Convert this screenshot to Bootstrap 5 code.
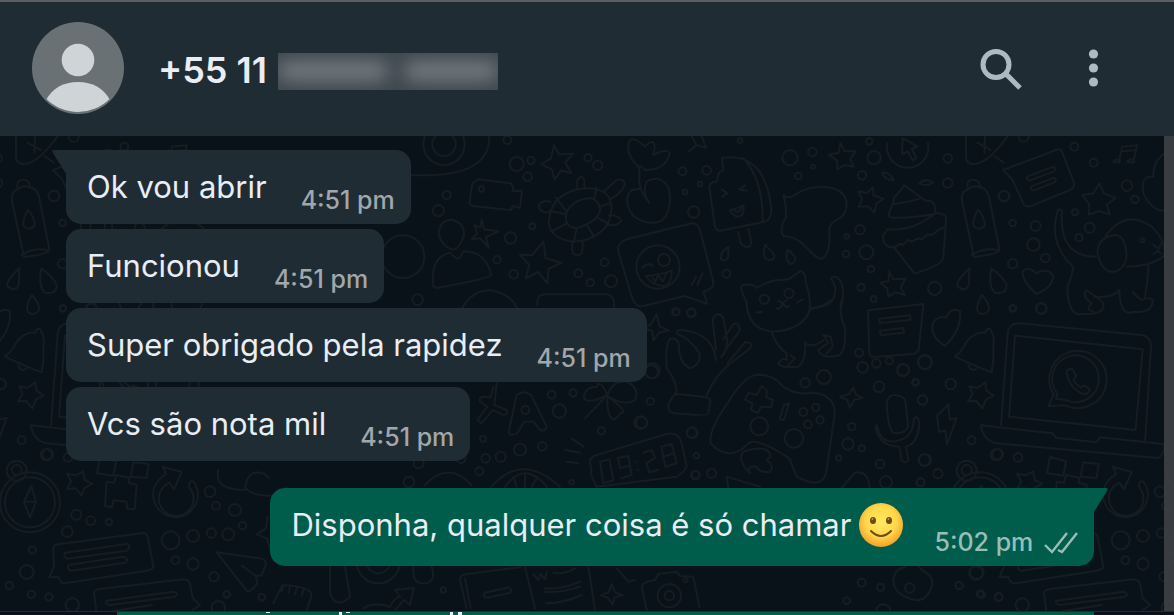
<!DOCTYPE html>
<html lang="pt-BR" data-bs-theme="dark">
<head>
<meta charset="utf-8">
<meta name="viewport" content="width=device-width, initial-scale=1">
<title>Conversa</title>
<link href="https://cdn.jsdelivr.net/npm/bootstrap@5.3.0/dist/css/bootstrap.min.css" rel="stylesheet">
<style>
  body { font-family: Inter, "Liberation Sans", sans-serif; background: #0a1219; color: #e9edef; }
  .chat-header { background: #202c33; border-top: 2px solid #5c5e62; padding: 20px 32px 22px; }
  .avatar { width: 92px; height: 92px; }
  .contact { font-size: 36px; line-height: 44px; font-weight: 600; margin-left: 34px; padding-top: 4px; color: #e9edf5; }
  .redacted { width: 220px; height: 37px; margin: 6px 0 0 11px; background: #3e474e; overflow: hidden; }
  .redacted span { height: 20px; background: #757b81; filter: blur(9px); border-radius: 8px; }
  .header-tools { margin-right: 22px; gap: 54px; }
  .icon-btn { width: 44px; height: 48px; color: #aebac1; line-height: 0; }
  .doodle-layer { z-index: 0; }
  .doodle-layer g { fill: none; stroke: #151d23; stroke-width: 6; stroke-linecap: round; stroke-linejoin: round; }
  .thread { z-index: 1; padding: 14px 80px 44px 66px; }
  .stack { gap: 5px; margin-bottom: 27px; }
  .bubble { border-radius: 15px; background: #202c33; padding: 15px 16px 9px 21px; color: #e9edf5; }
  .bubble p { font-size: 31px; line-height: 44px; padding-bottom: 6px; }
  .bubble time { font-size: 25px; line-height: 30px; font-weight: 500; margin-left: 34px; color: #a2a7ac; white-space: nowrap; }
  .bubble.first { border-top-left-radius: 0; }
  .bubble.sent { background: #005c4b; border-top-right-radius: 0; }
  .bubble.sent p { padding-bottom: 10px; }
  .bubble.sent time { margin-left: 31px; color: #99beb7; }
  .tail { top: 0; width: 14px; height: 24px; }
  .first .tail { right: 100%; }
  .sent .tail { left: 100%; }
  .emoji { width: 44px; height: 44px; margin-left: 8px; }
  .scroll-thumb { z-index: 2; width: 10px; background: rgba(66, 68, 72, .85); }
  .next-row { height: 4px; background: #0a0f19; border-top: 1px solid #252c31; padding: 0 80px 0 117px; z-index: 2; }
  .next-row svg { background: #005c4b; }
</style>
</head>
<body class="min-vh-100 d-flex flex-column">

<header class="chat-header d-flex align-items-center">
  <svg class="avatar flex-shrink-0" viewBox="0 0 92 92" role="img" aria-label="Foto do contato">
    <defs><clipPath id="face"><circle cx="46" cy="45" r="45"/></clipPath></defs>
    <circle cx="46" cy="46" r="46" fill="#6a7175"/>
    <g fill="#cfd4d7" clip-path="url(#face)">
      <circle cx="46" cy="38" r="16.300"/>
      <path d="M14 78Q24 60 46 60T78 78V92H14Z"/>
    </g>
  </svg>
  <h1 class="contact mb-0 text-nowrap">+55 11</h1>
  <div class="redacted d-flex align-items-center gap-3" aria-hidden="true"><span class="w-50"></span><span class="flex-grow-1"></span></div>
  <div class="header-tools ms-auto d-flex align-items-center">
    <button type="button" class="icon-btn btn border-0 p-0" aria-label="Pesquisar">
      <svg width="44" height="48" viewBox="0 0 44 48" fill="none" stroke="currentColor"><circle cx="18" cy="20.500" r="13" stroke-width="5"/><path d="M26 29L30 32L42 44" stroke-width="5"/></svg>
    </button>
    <button type="button" class="icon-btn btn border-0 p-0" aria-label="Menu">
      <svg width="44" height="48" viewBox="0 0 44 48" fill="currentColor"><circle cx="17.500" cy="10" r="4.600"/><circle cx="17.500" cy="24" r="4.600"/><circle cx="17.500" cy="38" r="4.600"/></svg>
    </button>
  </div>
</header>

<main class="position-relative flex-grow-1 d-flex flex-column overflow-hidden">
  <svg class="doodle-layer position-absolute top-0 start-0 w-100 h-100" aria-hidden="true">
    <defs>
    <g id="east">
      <g transform="translate(780,-6) scale(.33333)" data-dots="30 83 23,97 66 13,99 110 6,55 138 10,268 34 10,282 83 20,246 136 13,503 85 13,503 159 14,731 20 15,883 50 12,941 98 12,672 198 16,1041 167 16,1065 208 11,885 247 9,929 293 15,897 323 11,698 279 10,767 288 15,760 344 19,796 384 13,698 401 14,240 299 14,200 319 7,198 372 10,259 367 21,273 417 10,243 472 11,281 507 9,464 475 20,698 535 10,784 536 15,1087 331 6,27 490 14">
        <path d="M181 38l13 26 33-1-16 25 10 22-28-5-20 13-2-26-25-18 30-6zM278 172l3 23 29 12-21 14-6 27-19-19-28 1 10-22-10-24 25 5zM328 424l12 24 36-2-14 27 12 22-29-8-20 12-4-24-20-17 24-5zM958 160l14 31 35 12-26 21 8 29-32-10-30 11 1-31-21-29 32-3z"/>
        <path d="M368 24l44 26-17 6 14 28-11 7-15-27-17 9zM322 40A62 62 0 1 0 444 40M558 20V85Q566 111 600 98T682 20M592 38l40 22M615 20l-2 48M643 78l28 20"/>
        <path d="M10 195Q20 206 39 199Q80 165 140 172Q198 178 200 225C196 280 150 260 148 300Q152 376 125 386C90 384 75 320 12 319Q-5 300 18 260Q20 230 10 195Z"/>
        <path d="M372 165Q365 180 342 203Q340 222 330 242Q320 262 338 263Q390 265 465 252Q470 208 438 213Q405 190 372 165ZM342 222Q390 216 420 205M322 298Q400 305 465 250Q500 248 498 270L490 382Q490 405 404 431L342 352Q308 354 309 317L322 298M342 352L360 342 368 345 385 330 395 335 415 325 425 328 445 312 455 316 475 300 492 292"/>
        <path d="M418 160Q438 142 459 158Q438 171 418 160ZM306 128Q330 125 341 151Q315 151 306 128ZM22 360Q15 390 30 402Q48 400 45 382Q38 368 22 360Z"/>
        <path d="M564 178Q556 148 580 149Q600 150 600 172Q625 176 630 215L658 357Q660 373 582 381L546 214Q542 183 564 178M564 178Q580 164 600 172M575 374Q620 350 656 362M594 239Q574 275 582 289Q597 304 613 288Q618 270 594 239Z"/>
        <path d="M669 120L828 60Q843 54 848 70L882 158Q885 172 870 180L750 229Q736 232 729 218L696 147ZM742 140L820 110Q830 116 822 124L748 152Q738 148 742 140ZM752 170L822 143Q832 149 824 157L760 182Q750 178 752 170Z"/>
        <path d="M1018 92L1026 50 1071 46 1061 92M1028 64L1068 60M1000 95Q1010 83 1018 92T1000 95M1042 95Q1052 82 1061 92T1042 95"/>
        <path d="M846 242Q835 232 831 250Q805 340 880 412Q875 440 862 474Q865 560 905 552Q980 555 969 518Q950 500 918 480Q905 500 935 520Q915 540 940 544M941 500Q1000 505 1018 480Q1020 560 1058 546Q1120 550 1118 510Q1105 500 1084 510Q1070 500 1058 486M846 242Q835 380 948 380M976 318Q1040 235 1115 290Q1165 340 1150 380Q1110 410 1040 410M1105 405Q1105 440 1095 500M1008 314Q955 320 952 365Q965 435 1010 424Q1055 400 1032 336Q1025 320 1008 314ZM1120 344l16 12 8-16M1120 372l14-10 8 10"/>
        <path d="M568 415Q525 455 533 470Q560 490 567 460ZM634 415Q624 470 645 488Q680 495 680 465Q670 440 634 415ZM606 495Q582 535 597 549Q615 558 627 540Q629 520 606 495ZM768 492Q725 450 728 425Q745 405 768 430Q805 410 820 440Q815 475 768 492Z"/>
        <path d="M264 541L430 522 416 660 405 671 283 681Q268 681 268 665ZM298 566L390 556 392 570 300 579ZM300 602L370 594 372 608 302 616ZM495 648Q450 620 458 580Q475 555 500 563Q510 530 540 543Q545 600 495 648Z"/>
        <path d="M-10 450Q10 452 30 445L60 424Q75 420 78 460Q95 510 88 540Q84 560 70 572M90 535Q150 530 160 505Q175 470 152 445Q170 430 185 460Q195 500 182 530M-5 512L8 520 20 510M8 520Q0 540-10 535M8 520Q20 538 28 528M52 518L68 508"/>
        <path d="M1152 72Q1120 90 1120 140Q1080 135 1090 190Q1120 250 1160 240"/>
      </g>
      <g transform="translate(900,164) scale(.33333)" data-dots="339 25 9,424 25 16,75 187 20,10 210 17,47 247 9,152 252 16,68 300 14,215 421 12,73 480 17,114 521 14,62 547 12,289 464 17,354 472 13">
        <path d="M303 375L323 100Q328 68 360 70L725 105Q755 112 753 140L735 425M345 107L728 148 707 390 327 350ZM243 376L458 400 468 413 590 427 600 412 790 432Q800 455 775 474L290 430Q248 420 243 376Z"/>
        <path d="M461 284A86 86 0 1 1 497 316L445 318ZM472 280A70 70 0 1 1 500 301L468 296ZM500 214Q505 204 518 208L528 228Q526 238 520 241Q528 255 543 262L552 256 570 268Q566 284 548 282Q505 262 500 214Z"/>
        <path d="M256 98Q265 75 275 95T280 140Q282 180 275 217Q240 205 165 170Q185 155 200 125Q225 95 256 98ZM205 195Q212 218 230 205M256 247l3 25 22 15-23 11-11 27-18-22-25 1 14-22-10-23 24 5zM145 313L111 348 117 395 136 392 141 433 170 354 149 359Z"/>
      </g>
    </g>
    <g id="west">
      <g transform="translate(0,314) scale(.33333)" data-dots="50 62 30,50 60 15,90 157 90,90 157 75,229 194 15,272 212 13,327 216 9,202 245 16,97 300 11,80 366 21,28 407 11,94 433 11,147 441 11,217 465 20,630 125 16,648 168 12,705 180 18,728 227 11,685 253 18,634 249 14,579 258 18,512 271 27,526 331 12,579 342 17,642 380 14,680 433 10,785 441 10,655 473 20,143 13 16">
        <path d="M94 107L108 155 90 203 72 155ZM72 155H108M250 64l4 26 23 11-24 13-8 22-18-21-25 2 11-23-12-23 26 5zM300 20L348 34 340 77 291 70ZM400 37L446 42 440 84 392 80ZM348 75L342 98 320 95 315 168 336 172 340 150 380 155 382 176 404 178 410 105 386 98 388 83Z"/>
        <path d="M498 72L488 50 545 66 522 118 508 98A52 52 0 1 0 568 112Q565 95 575 94T592 120A67 67 0 1 1 480 86Z"/>
        <path d="M655 60Q640 120 735 120Q740 55 790 70L808 84M735 110Q750 140 830 137M650 307L785 326Q803 332 796 348L785 375 768 380 772 400Q750 430 740 422ZM725 347L768 378M803 200L798 235 770 253 800 265 812 300"/>
        <path d="M160 295Q162 285 175 283L430 249Q442 250 444 265L460 350Q458 358 440 362L195 400Q180 400 175 380L148 382 162 350ZM195 308L380 282Q396 288 380 302L200 326Q188 318 195 308ZM205 345L370 320Q390 325 375 338L215 362Q200 360 205 345Z"/>
        <path d="M290 490L282 430Q282 420 300 417L550 388Q568 388 571 405L578 445 600 465 578 480M320 452L520 425Q540 430 525 440L330 465Q312 462 320 452M340 483L455 465"/>
      </g>
    </g>
    </defs>
    <use href="#east"/><use href="#east" x="-950"/>
    <use href="#west"/><use href="#west" x="950"/>
    <g>
      <g transform="translate(400,-6) scale(.33333)" data-dots="350 102 21,393 91 11,383 140 13,564 83 11,593 106 14,140 195 12,115 242 17,332 324 17,397 289 9,291 389 11,341 433 13,535 430 12,571 458 11,614 397 12,633 454 18,847 124 12,920 121 13,900 162 7,855 186 7,881 246 17,979 431 12,829 546 10,874 548 12,53 509 16,322 30 12,132 43 62,132 43 35,244 177 8,1020 32 7,774 411 65,792 390 18,9 380 64,1093 508 14">
        <path d="M20 134Q270 150 268 20M462 45l15 28 42-2-23 27 18 32-31-9-19 28-9-31-32-16 30-17zM235 148L332 160Q342 168 338 184L366 182 360 234 338 228 333 240 218 228Q205 224 209 210L217 160ZM245 268l7 30 43 6-37 17 8 32-25-28-27 3 18-18-9-25 18 7zM430 334l7 50 47 15-38 17-4 44-28-34-37 20 11-41-29-31 38 1z"/>
        <path d="M116 312Q118 270 155 269Q198 280 191 320Q175 360 158 359Q125 350 116 312ZM100 470Q90 380 150 368Q172 392 180 383L190 364Q260 365 273 435Q270 445 110 474ZM187 533Q220 480 270 481Q330 490 350 533M412 525Q410 490 440 493H620Q645 495 642 530"/>
        <path d="M525 180Q590 165 622 195Q645 230 625 280Q590 330 525 335Q455 330 446 280Q450 200 525 180ZM500 245Q520 208 570 204Q600 210 600 245Q585 280 530 294Q490 295 500 245ZM590 172L583 205M628 220L600 230M620 278L594 264M580 316L562 288M522 333L530 295M460 302L500 280M448 242L494 252M468 202L496 240M532 178V150Q543 130 553 150V174M614 182L650 150Q675 145 674 165Q660 195 630 207M452 215Q420 208 416 230Q420 248 450 248M627 256Q655 255 665 272Q650 290 624 285M516 336L518 370Q530 380 546 370L549 332"/>
        <path d="M716 112Q670 65 690 30Q705 20 735 50Q765 20 764 55L760 75Q795 55 809 68Q800 120 736 120L722 108M718 108V160Q725 195 748 218Q725 185 740 155Q780 130 806 175Q820 240 785 272Q745 290 700 258Q665 210 695 180L722 176"/>
        <path d="M966 84Q1090 65 1112 220Q1120 265 1095 275L960 302Q948 304 944 285L928 170Q930 155 950 155L956 130 970 120ZM1030 84Q1090 150 1088 275M1014 306L1022 340Q1050 365 1054 335L1045 296M965 178L982 190 966 200M1036 166L1018 178 1040 182M990 240Q1015 235 1030 225Q1035 260 1012 260Q995 255 990 240M1002 239Q1015 255 1025 232"/>
        <path d="M655 350Q660 335 680 328L875 280Q895 280 900 300L940 455Q945 475 910 485L922 522 855 498 720 530Q705 525 695 500L655 365ZM728 412Q745 395 758 408M738 438Q780 435 815 422Q815 465 790 468Q755 465 738 438M755 438L765 455 775 436 788 455 800 430M888 440L875 465M908 430L892 465"/>
        <path d="M986 350Q955 370 965 390Q990 395 984 365ZM1095 344Q1085 385 1105 390Q1130 390 1120 370ZM1040 515Q1015 470 1028 465Q1060 460 1070 474Q1100 455 1130 450M1040 515Q1040 545 1050 560M1070 548L1085 545M865 65L890 45 875 20M890 45L918 54 905 20"/>
      </g>
      <g transform="translate(640,164) scale(.33333)" data-dots="107 36 11,154 38 13,37 212 22,5 368 17,155 398 15,169 467 8,167 524 11,215 520 14,495 248 14,552 231 21,657 158 12,668 202 16,709 190 13,748 182 11,789 210 18,855 186 21,826 247 10,717 260 16,848 300 14,635 380 11,624 432 17,666 445 9,596 474 8,720 492 13,855 480 18,841 547 12,738 547 18,358 379 27,462 415 28,490 336 12,527 322 11,540 360 11,504 373 12">
        <path d="M50 42l8 37 28 12-29 7-17 23-3-28-34-12 28-6zM110 285Q110 240 80 205Q75 130 90 118Q105 110 116 128Q115 190 152 205Q185 190 178 160Q150 115 112 102Q105 85 140 92Q220 105 228 180M200 285Q225 230 265 195L330 145Q340 125 315 127L262 190M250 160L300 90Q295 65 280 72L250 118M228 150L218 60Q230 30 250 52L262 125Q260 155 243 172M105 281L195 291Q215 292 210 310L205 340Q203 350 100 339Q80 335 86 310Z"/>
        <path d="M265 306C320 215 355 210 410 240Q450 290 520 278Q590 285 583 350L558 520Q545 570 470 530L448 475Q350 410 325 430Q270 490 212 430Q205 390 265 306ZM365 258l16 14-2 20 20 8-6 22-30-2-10 19-20-10 4-18-22-12 10-20 25 5zM432 315L447 310 432 360 419 357ZM330 520Q290 480 310 455Q385 430 392 470L380 480Q405 500 390 515Q360 520 350 500Q320 495 330 520"/>
        <path d="M320 10Q325 90 400 95Q490 90 512 26Q555 20 572 0M605 0Q595 45 615 80Q620 140 600 165Q545 180 535 150L565 128 550 105 572 110 578 140 560 160M495 130Q520 145 550 120M495 125Q500 180 475 200Q420 205 415 190Q430 170 440 180V160Q410 140 395 98M450 165L465 175 445 195"/>
        <path d="M640 262l8 22 20 10-26 6-12 24-8-24-22-10 27-8zM740 310Q745 280 770 286Q800 290 798 320L804 380Q790 405 760 398Q745 390 740 310ZM710 375Q725 440 780 420Q820 410 822 355Q835 345 838 370Q835 430 797 440L806 480Q795 495 785 480L778 440Q720 440 707 385ZM605 564L645 518Q685 510 689 564M265 564L260 530 360 560"/>
      </g>
      <g transform="translate(400,234) scale(.33333)" data-dots="455 74 12,519 69 11,478 123 20,249 206 9,360 239 18,427 229 13,302 260 15,257 265 13,238 304 12,604 183 11,722 158 19,751 94 11,877 188 16,27 336 16,515 337 7,886 315 13,754 5 20,376 120 12,56 280 15,183 265 14">
        <path d="M290 40L283 105 320 120Q328 135 310 135L278 120 245 160 232 150 262 110 240 95Q238 80 250 80L272 82 280 50M350 75Q370 58 393 75L440 170Q438 185 420 180L400 155H372L352 190Q325 200 326 185Z"/>
        <path d="M622 75Q550 110 552 75Q560 50 590 50Q600 25 622 75Q640 30 680 35Q720 55 705 90Q675 110 625 80Q690 130 660 130Q645 160 630 140Q620 115 622 75L555 145M515 205L550 230M495 240L540 248M500 275L535 280"/>
        <path d="M570 270Q572 262 590 255L800 192Q835 185 845 220L860 290Q850 310 830 320L590 350 575 320ZM600 275L628 268 640 330 610 340ZM660 293L654 263 685 258 695 315 662 325M660 293L690 288M710 275V276M714 300V301M730 248L755 240 765 262 740 280 748 307 775 300M784 230L815 222 830 280 796 290ZM788 260L822 250M275 350Q365 245 480 350M315 350Q375 270 440 350M340 320L350 350M375 310V350M410 325L395 350M75 345Q145 270 215 345"/>
      </g>
      <g transform="translate(230,424) scale(.33333)" data-dots="445 5 65,445 5 35,96 112 10,640 90 8,1318 107 35,1318 107 14,1366 60 6">
        <path d="M130 130L155 80Q165 68 230 88Q250 95 242 115L230 150M160 75L155 95M180 80L176 98M200 85L195 103M220 90L215 108M300 20V100Q320 150 360 110L345 20M550 20Q545 70 580 70Q620 70 605 20M400 145Q430 125 480 140Q495 110 510 110L495 90 552 84 540 135 522 120 495 150M710 145L690 60Q690 45 710 42L870 22M722 145L705 55M885 20L915 145M910 42L925 60 932 42 945 58 950 36M970 38Q1000 45 1035 25M945 85Q990 90 1050 65M945 95Q990 100 1050 80M948 130Q1000 130 1055 105M1075 20L1095 150M765 98L835 82Q850 90 840 98L770 113Q755 108 765 98M1145 72l10 25 24 8-25 7-6 22-13-20-22-8 23-10zM1250 150L1235 80Q1240 65 1275 60L1285 42 1340 35 1350 48 1390 50 1408 140M1160 25L1195 65 1215 60"/>
      </g>
      <g transform="translate(840,344) scale(.33333)" data-dots="65 308 12,122 322 11,357 316 11,420 342 10,475 351 12,408 279 20,209 324 14,20 362 10,130 395 22"><path d="M160 300Q165 265 195 262Q215 230 245 270Q285 290 275 320Q260 365 225 360Q160 345 160 300"/></g>
    </g>
  </svg>

  <section class="thread position-relative flex-grow-1 d-flex flex-column align-items-start" aria-label="Mensagens">
    <div class="stack d-flex flex-column align-items-start">
      <article class="bubble first position-relative d-flex align-items-end">
        <svg class="tail position-absolute" viewBox="0 0 14 24" aria-hidden="true"><path d="M14 0H2Q-1 0 1 3L14 24Z" fill="#202c33"/></svg>
        <p class="mb-0">Ok vou abrir</p><time datetime="16:51">4:51 pm</time>
      </article>
      <article class="bubble d-flex align-items-end"><p class="mb-0">Funcionou</p><time datetime="16:51">4:51 pm</time></article>
      <article class="bubble d-flex align-items-end"><p class="mb-0">Super obrigado pela rapidez</p><time datetime="16:51">4:51 pm</time></article>
      <article class="bubble d-flex align-items-end"><p class="mb-0">Vcs são nota mil</p><time datetime="16:51">4:51 pm</time></article>
    </div>
    <article class="bubble sent position-relative d-flex align-items-end align-self-end">
      <svg class="tail position-absolute" viewBox="0 0 14 24" aria-hidden="true"><path d="M0 0H12Q15 0 13 3L0 24Z" fill="#005c4b"/></svg>
      <p class="mb-0 d-flex align-items-center">Disponha, qualquer coisa é só chamar
        <svg class="emoji" viewBox="0 0 44 44" role="img" aria-label="sorriso">
          <defs><radialGradient id="sun" cx=".5" cy=".42" r=".58"><stop offset="0" stop-color="#ffe862"/><stop offset=".6" stop-color="#ffd84a"/><stop offset="1" stop-color="#f3a02b"/></radialGradient></defs>
          <circle cx="22" cy="22" r="22" fill="url(#sun)"/>
          <ellipse cx="14" cy="17.500" rx="3" ry="3.500" fill="#6d4a12"/><ellipse cx="30" cy="17.500" rx="3" ry="3.500" fill="#6d4a12"/>
          <circle cx="13.500" cy="16" r="1" fill="#b99b5c"/><circle cx="29.500" cy="16" r="1" fill="#b99b5c"/>
          <path d="M12 28Q22 38 32 28" fill="none" stroke="#70480f" stroke-width="2" stroke-linecap="round"/>
        </svg></p>
      <time datetime="17:02">5:02 pm <svg class="ms-1" width="34" height="24" viewBox="0 0 34 24" fill="none" stroke="currentColor" stroke-width="2.400" role="img" aria-label="Entregue"><path d="M1 13L8 20L23 1M14 18L18 20L33 1"/></svg></time>
    </article>
  </section>
  <div class="scroll-thumb position-absolute top-0 end-0 h-100"></div>
</main>

<footer class="next-row d-flex" aria-hidden="true">
  <svg class="w-100 h-100"><g fill="#e9edf5"><rect x="149" width="4" height="1"/><rect x="222" width="3" height="3"/><rect x="229" width="4" height="1"/><rect x="333" width="3" height="3"/><rect x="341" width="4" height="3"/></g></svg>
</footer>

<script>
  // Each data-dots list holds "x y radius" triples for the small rings of the wallpaper.
  document.querySelectorAll('[data-dots]').forEach(function (group) {
    group.dataset.dots.split(',').forEach(function (dot) {
      var v = dot.split(' ');
      var c = document.createElementNS('http://www.w3.org/2000/svg', 'circle');
      c.setAttribute('cx', v[0]); c.setAttribute('cy', v[1]); c.setAttribute('r', v[2]);
      group.appendChild(c);
    });
  });
</script>
<script src="https://cdn.jsdelivr.net/npm/bootstrap@5.3.0/dist/js/bootstrap.bundle.min.js"></script>
</body>
</html>
